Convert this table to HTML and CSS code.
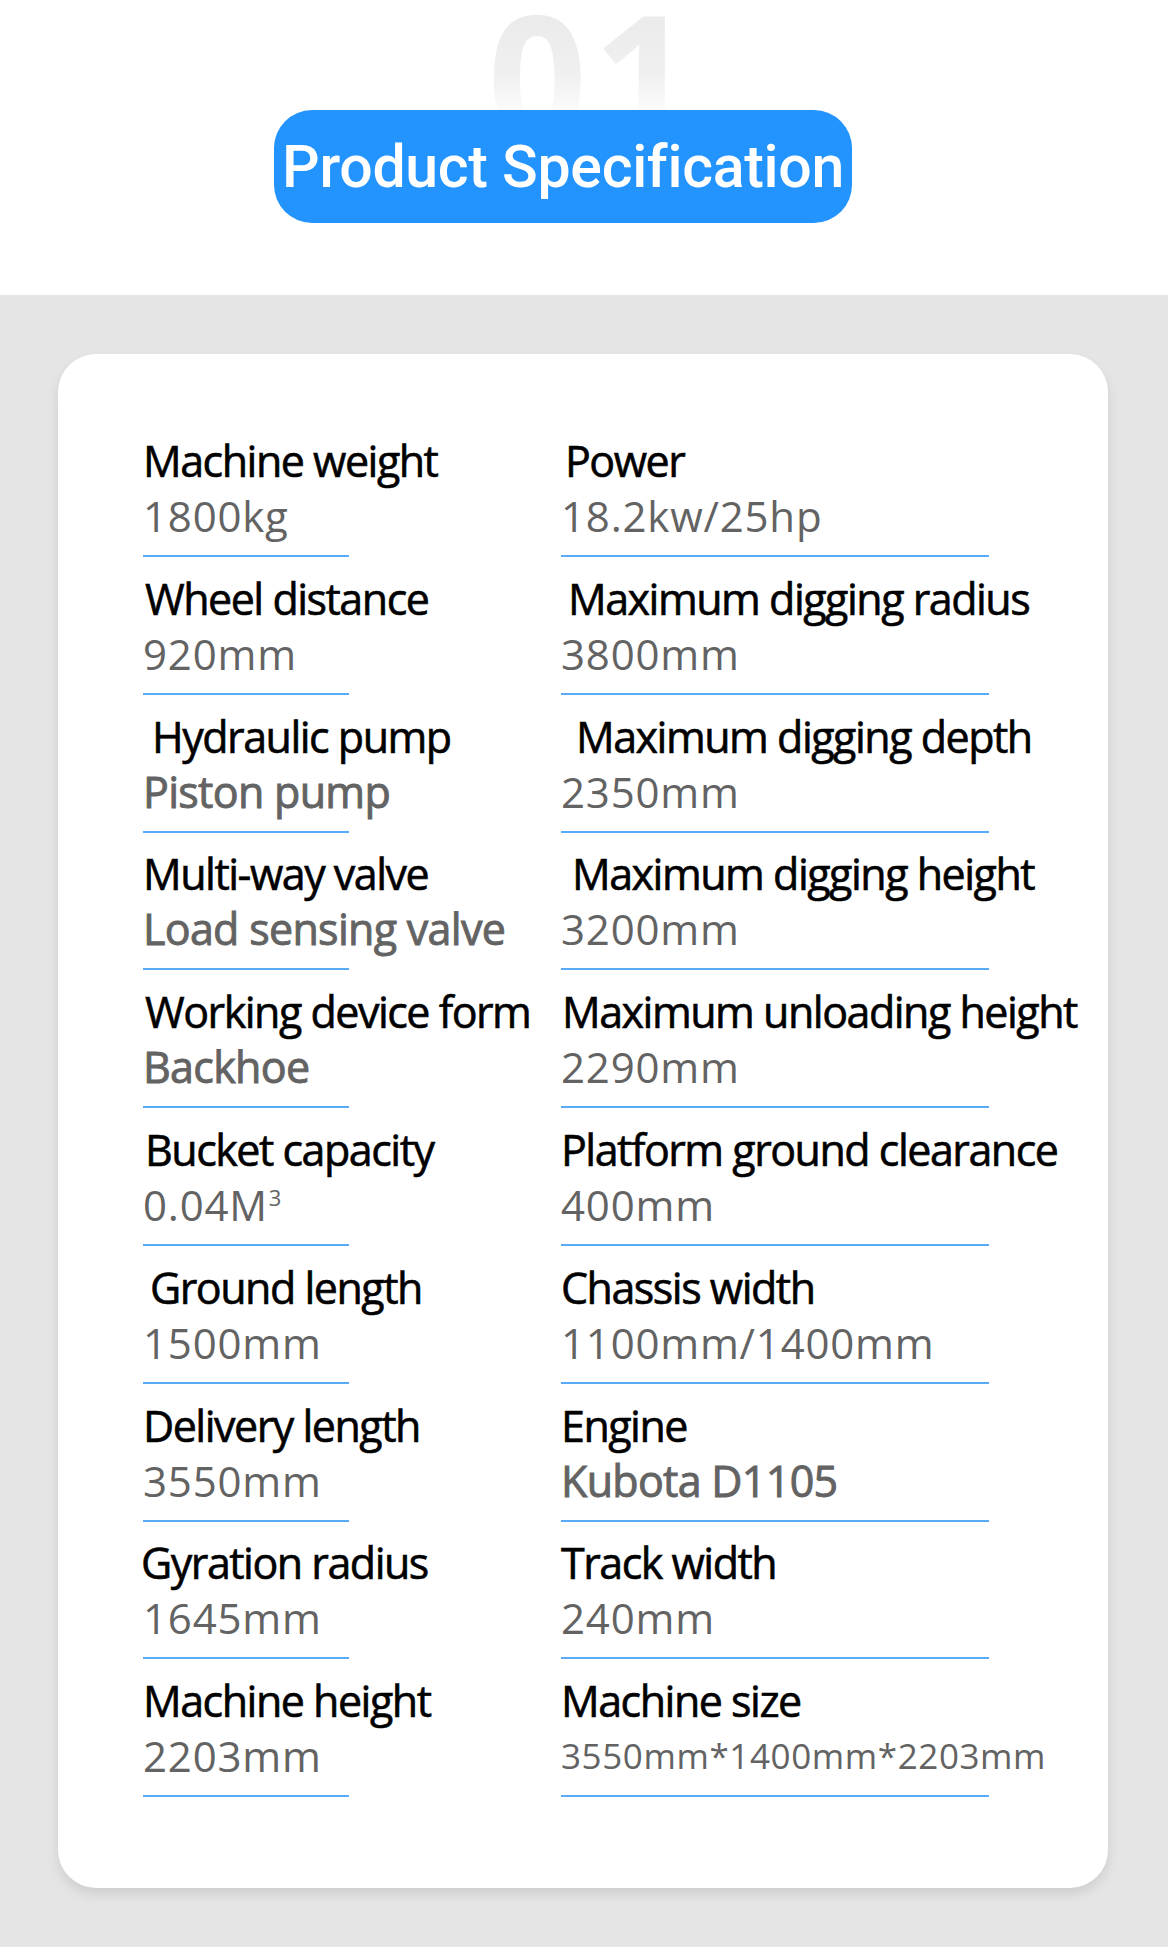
FILE: index.html
```html
<!DOCTYPE html>
<html lang="en">
<head>
    <meta charset="UTF-8">
    <meta name="viewport" content="width=device-width, initial-scale=1.0">
    <title>Product Specification</title>
    <link rel="stylesheet" href="styles.css">
</head>
<body>
  <header class="spec-head">
    <div class="spec-badge">
      <span class="spec-num">01</span>
      <h1 class="spec-title">Product Specification</h1>
    </div>
  </header>

  <main class="spec-wrap">
    <section class="spec-card">
      <div class="spec-grid">
        <div class="spec-item">
          <div class="spec-label">Machine weight</div>
          <div class="spec-value">1800kg</div>
        </div>
        <div class="spec-item">
          <div class="spec-label in-4">Power</div>
          <div class="spec-value">18.2kw/25hp</div>
        </div>

        <div class="spec-item">
          <div class="spec-label in-2">Wheel distance</div>
          <div class="spec-value">920mm</div>
        </div>
        <div class="spec-item">
          <div class="spec-label in-7">Maximum digging radius</div>
          <div class="spec-value">3800mm</div>
        </div>

        <div class="spec-item">
          <div class="spec-label in-9">Hydraulic pump</div>
          <div class="spec-value spec-value--text">Piston pump</div>
        </div>
        <div class="spec-item">
          <div class="spec-label in-15">Maximum digging depth</div>
          <div class="spec-value">2350mm</div>
        </div>

        <div class="spec-item">
          <div class="spec-label">Multi-way valve</div>
          <div class="spec-value spec-value--text">Load sensing valve</div>
        </div>
        <div class="spec-item">
          <div class="spec-label in-11">Maximum digging height</div>
          <div class="spec-value">3200mm</div>
        </div>

        <div class="spec-item">
          <div class="spec-label in-2">Working device form</div>
          <div class="spec-value spec-value--text">Backhoe</div>
        </div>
        <div class="spec-item">
          <div class="spec-label in-1">Maximum unloading height</div>
          <div class="spec-value">2290mm</div>
        </div>

        <div class="spec-item">
          <div class="spec-label in-2">Bucket capacity</div>
          <div class="spec-value">0.04M<sup class="spec-sup">3</sup></div>
        </div>
        <div class="spec-item">
          <div class="spec-label">Platform ground clearance</div>
          <div class="spec-value">400mm</div>
        </div>

        <div class="spec-item">
          <div class="spec-label in-7">Ground length</div>
          <div class="spec-value">1500mm</div>
        </div>
        <div class="spec-item">
          <div class="spec-label">Chassis width</div>
          <div class="spec-value">1100mm/1400mm</div>
        </div>

        <div class="spec-item">
          <div class="spec-label">Delivery length</div>
          <div class="spec-value">3550mm</div>
        </div>
        <div class="spec-item">
          <div class="spec-label">Engine</div>
          <div class="spec-value spec-value--text">Kubota D1105</div>
        </div>

        <div class="spec-item">
          <div class="spec-label out-2">Gyration radius</div>
          <div class="spec-value">1645mm</div>
        </div>
        <div class="spec-item">
          <div class="spec-label">Track width</div>
          <div class="spec-value">240mm</div>
        </div>

        <div class="spec-item">
          <div class="spec-label">Machine height</div>
          <div class="spec-value">2203mm</div>
        </div>
        <div class="spec-item">
          <div class="spec-label">Machine size</div>
          <div class="spec-value spec-value--small">3550mm*1400mm*2203mm</div>
        </div>
      </div>
    </section>
  </main>
</body>
</html>
```

FILE: styles.css
```css
:root {
  --clr-blue: #2393fe;
  --clr-rule: #5aabf7;
  --clr-bg: #e5e5e5;
  --clr-ink: #000;
  --clr-muted: #636363;
  --font-label: 'Open Sans', 'Liberation Sans', sans-serif;
  --font-value: 'Open Sans', 'Liberation Sans', sans-serif;
}
* { margin: 0; padding: 0; box-sizing: border-box; }
body {
  background: var(--clr-bg);
  font-family: var(--font-label);
  color: var(--clr-ink);
}

/* Header */
.spec-head {
  height: 295px;
  background: #fff;
  display: flex;
  justify-content: center;
  padding: 110px 42px 0 0;
}
.spec-badge {
  position: relative;
  height: 113px;
  width: 578px;
}
.spec-num {
  position: absolute;
  top: -123px;
  left: 50%;
  transform: translateX(-50%);
  margin-left: 30px;
  font-family: 'Open Sans', sans-serif;
  font-weight: 700;
  font-size: 174px;
  line-height: 1;
  letter-spacing: 6px;
  background: linear-gradient(to bottom, #ebebeb 20%, #f0f0f0 50%, #fbfbfb 72%);
  -webkit-background-clip: text;
  background-clip: text;
  color: transparent;
}
.spec-title {
  position: relative;
  height: 100%;
  background: var(--clr-blue);
  border-radius: 38px;
  color: #fff;
  font-family: 'Roboto', sans-serif;
  font-weight: 500;
  font-size: 59px;
  letter-spacing: -0.3px;
  display: flex;
  align-items: center;
  justify-content: center;
}

/* Card */
.spec-wrap {
  padding: 59px 60px 59px 58px;
}
.spec-card {
  background: #fff;
  border-radius: 38px;
  box-shadow: 0 6px 12px rgba(0,0,0,0.1);
  padding: 80px 0 91px 85px;
}
.spec-grid {
  display: grid;
  grid-template-columns: 417px 1fr;
  row-gap: 14.8px;
}
.spec-item::after {
  content: "";
  display: block;
  height: 2px;
  width: 206px;
  margin-top: 11px;
  background: var(--clr-rule);
}
.spec-item:nth-child(even)::after { width: 428px; }
.spec-item:nth-child(even) { padding-left: 1px; }

.spec-label {
  font-family: var(--font-label);
  font-weight: 400;
  font-size: 43px;
  line-height: 54px;
  letter-spacing: -1.5px;
  -webkit-text-stroke: 0.6px currentColor;
  white-space: nowrap;
}
.spec-value {
  font-family: var(--font-value);
  font-weight: 400;
  font-size: 42px;
  line-height: 56px;
  letter-spacing: 0.8px;
  color: var(--clr-muted);
  white-space: nowrap;
}
.spec-value--text {
  font-family: var(--font-label);
  font-size: 43px;
  letter-spacing: -0.7px;
  -webkit-text-stroke: 0.9px currentColor;
}
.spec-value--small {
  font-size: 35px;
  letter-spacing: 0.6px;
}
.spec-sup {
  font-size: 22px;
  line-height: 0;
  vertical-align: 15px;
  margin-left: 1px;
}

/* small offsets from the source layout */
.in-1 { padding-left: 1px; }
.in-2 { padding-left: 2px; }
.in-4 { padding-left: 4px; }
.in-7 { padding-left: 7px; }
.in-9 { padding-left: 9px; }
.in-11 { padding-left: 11px; }
.in-15 { padding-left: 15px; }
.out-2 { margin-left: -2px; }
```
